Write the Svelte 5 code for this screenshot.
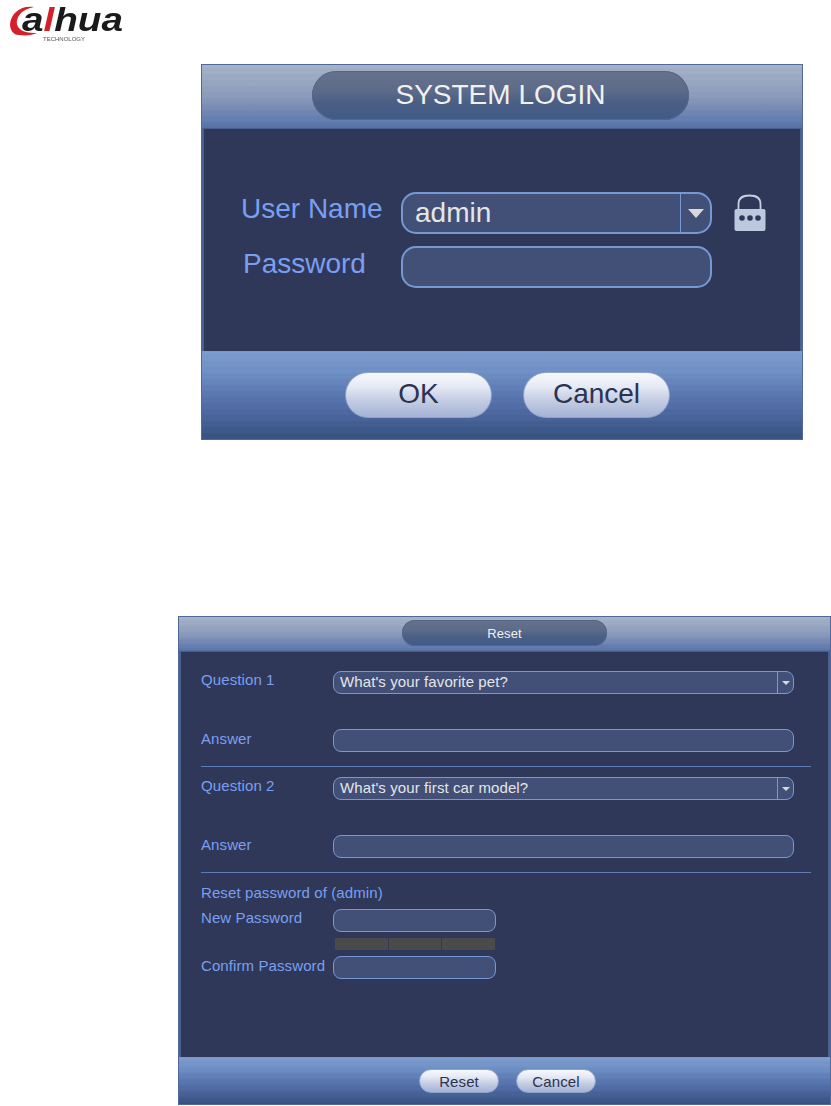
<script>
	const meterSegments = [0, 1, 2];
</script>

<div class="page">
	<header class="brand">
		<svg class="logo" width="128" height="44" viewBox="0 0 128 44" aria-label="alhua">
			<path d="M34 7 C21 5 11 13 10 24 C10 30 13 35 19 35 C27 36 32 35 37 33 C28 33 22 32 19 28 C15 24 17 17 21 13 C24 10 29 8 34 7 Z" fill="#d5202a" />
			<text x="22" y="31" class="logo-text" fill="#1a1a1a" textLength="101" lengthAdjust="spacingAndGlyphs">a<tspan fill="#d5202a">l</tspan>hua</text>
			<text x="43" y="40.5" class="logo-sub" fill="#555">TECHNOLOGY</text>
		</svg>
	</header>

	<section class="dialog login">
		<div class="head">
			<div class="title">SYSTEM LOGIN</div>
		</div>
		<div class="body">
			<div class="login-grid">
				<span class="label user">User Name</span>
				<div class="field select">
					<span class="value">admin</span>
					<span class="caret"><i></i></span>
				</div>
				<svg class="lock" width="32" height="38" viewBox="0 0 32 38">
					<path d="M4.5 15 V10 C4.5 4 9 1.5 15.5 1.5 C22 1.5 26.5 4 26.5 10 V15" fill="none" stroke="#c6d0e2" stroke-width="1.8" />
					<rect x="0.5" y="15" width="31" height="22" rx="2" fill="#bcc8de" />
					<circle cx="8" cy="24" r="2.8" fill="#2f3858" />
					<circle cx="16" cy="24" r="2.8" fill="#2f3858" />
					<circle cx="24" cy="24" r="2.8" fill="#2f3858" />
				</svg>

				<span class="label pass">Password</span>
				<div class="field"></div>
			</div>
		</div>
		<div class="foot">
			<button class="btn">OK</button>
			<button class="btn">Cancel</button>
		</div>
	</section>

	<section class="dialog reset">
		<div class="head">
			<div class="title">Reset</div>
		</div>
		<div class="body">
			<div class="qa">
				<span class="label">Question 1</span>
				<div class="field select">
					<span class="value">What's your favorite pet?</span>
					<span class="caret"><i></i></span>
				</div>
				<span class="label lower">Answer</span>
				<div class="field"></div>
			</div>
			<hr />
			<div class="qa">
				<span class="label">Question 2</span>
				<div class="field select">
					<span class="value">What's your first car model?</span>
					<span class="caret"><i></i></span>
				</div>
				<span class="label lower">Answer</span>
				<div class="field"></div>
			</div>
			<hr />
			<div class="label reset-of">Reset password of (admin)</div>
			<div class="pw-grid">
				<span class="label">New Password</span>
				<div class="field"></div>
				<div class="meter">
					{#each meterSegments as seg (seg)}
						<span></span>
					{/each}
				</div>
				<span class="label lower">Confirm Password</span>
				<div class="field"></div>
			</div>
		</div>
		<div class="foot">
			<button class="btn">Reset</button>
			<button class="btn">Cancel</button>
		</div>
	</section>
</div>

<style>
	:global(body) {
		margin: 0;
		background: #fff;
	}

	.page {
		width: 831px;
		height: 1106px;
		overflow: hidden;
		font-family: 'Liberation Sans', Arial, sans-serif;
	}

	/* Logo */
	.brand {
		height: 64px;
	}

	.logo {
		display: block;
		filter: blur(0.5px);
	}

	.logo-text {
		font-family: 'Liberation Sans', Arial, sans-serif;
		font-size: 34px;
		font-weight: 700;
		font-style: italic;
	}

	.logo-sub {
		font-family: 'Liberation Sans', Arial, sans-serif;
		font-size: 6px;
	}

	/* Shared dialog chrome */
	.dialog {
		display: flex;
		flex-direction: column;
		box-sizing: border-box;
		border: 1px solid #50689a;
		background: #2f3858;
	}

	.head {
		display: flex;
		justify-content: center;
		box-sizing: border-box;
		flex: none;
		background:
			repeating-linear-gradient(rgba(255, 255, 255, 0.012) 0 3px, rgba(0, 0, 0, 0.012) 3px 6px),
			linear-gradient(#a6b2c8 0%, #98a8c2 25%, #8a9bbc 50%, #7488b2 72%, #5d7bb0 92%, #566f9f 100%);
		border-bottom: 1px solid #4a5d8c;
	}

	.title {
		display: flex;
		align-items: center;
		justify-content: center;
		box-sizing: border-box;
		color: #f1f1ef;
		background: linear-gradient(#66728d 0%, #5c6b89 40%, #4c5f85 62%, #3f5b88 100%);
		box-shadow: inset 0 0 0 1px #566786;
	}

	.body {
		flex: 1;
		box-sizing: border-box;
		border-left: 2px solid #4d5f8e;
		border-right: 2px solid #4d5f8e;
		min-height: 0;
	}

	.foot {
		display: flex;
		justify-content: center;
		flex: none;
		box-sizing: border-box;
		background:
			repeating-linear-gradient(rgba(255, 255, 255, 0.012) 0 3px, rgba(0, 0, 0, 0.012) 3px 6px),
			linear-gradient(#7b9ccd 0%, #7091c6 22%, #5a78b2 48%, #4d69a2 68%, #3e5a8c 88%, #375080 100%);
		border-top: 1px solid #7b97c4;
	}

	.btn {
		padding: 0;
		font-family: inherit;
		color: #2b3350;
		background: linear-gradient(#f7f8fc 0%, #e6eaf4 30%, #c4cde3 62%, #a4b2d6 100%);
		border: 1px solid #8ea2cb;
		cursor: pointer;
	}

	.field {
		position: relative;
		display: flex;
		align-items: center;
		box-sizing: border-box;
		background: #425077;
		border: solid #7699d3;
	}

	.value {
		color: #e4e6e6;
	}

	.caret {
		position: absolute;
		top: 0;
		right: 0;
		bottom: 0;
		display: flex;
		align-items: center;
		justify-content: center;
		box-sizing: border-box;
		border-left: 1px solid #7699d3;
	}

	.caret i {
		display: block;
		width: 0;
		height: 0;
		border-style: solid;
		border-color: #d8d9da transparent transparent;
	}

	.label {
		color: #7b9ff0;
		white-space: nowrap;
	}

	/* Login dialog */
	.login {
		width: 602px;
		height: 376px;
		margin-left: 201px;
		font-size: 28px;
	}

	.login .head {
		height: 64px;
		padding: 6px 3px 0 0;
	}

	.login .title {
		width: 377px;
		height: 49px;
		padding-bottom: 2px;
		border-radius: 25px;
	}

	.login .body {
		padding: 63px 0 0 37px;
	}

	.login-grid {
		display: grid;
		grid-template-columns: 160px 311px auto;
		grid-template-rows: 42px 42px;
		row-gap: 12px;
		align-items: center;
	}

	.login .field {
		height: 42px;
		border-width: 2.5px;
		border-radius: 15px;
		padding-left: 12px;
	}

	.login .caret {
		width: 30px;
	}

	.login .caret i {
		border-width: 9px 8px 0;
	}

	.lock {
		margin-left: 22px;
	}

	.label.user {
		margin-top: -9px;
	}

	.label.pass {
		margin: -6px 0 0 2px;
	}

	.login .foot {
		height: 88px;
		gap: 31px;
		padding: 20px 0 0 11px;
	}

	.login .btn {
		width: 147px;
		height: 46px;
		padding-bottom: 3px;
		font-size: 28px;
		border-radius: 23px;
	}

	/* Reset dialog */
	.reset {
		width: 653px;
		height: 489px;
		margin: 176px 0 0 178px;
		font-size: 15px;
		letter-spacing: 0.1px;
	}

	.reset .head {
		height: 35px;
		padding-top: 3px;
	}

	.reset .title {
		width: 205px;
		height: 26px;
		border-radius: 13px;
		font-size: 13px;
	}

	.reset .body {
		padding: 19px 17px 0 20px;
	}

	.qa {
		display: grid;
		grid-template-columns: 132px 461px;
		grid-template-rows: 23px 23px;
		row-gap: 35px;
	}

	.qa + hr {
		margin: 14px 0 10px;
	}

	hr {
		height: 1px;
		margin: 0;
		border: 0;
		background: #5f7db4;
	}

	.reset .field {
		height: 23px;
		border-width: 1.5px;
		border-radius: 8px;
		padding: 0 0 2px 6px;
	}

	.reset .label.lower {
		margin-top: 1px;
	}

	.reset .caret {
		width: 16px;
	}

	.reset .caret i {
		border-width: 4px 4px 0;
	}

	.reset-of {
		margin-top: 10px;
		line-height: 19px;
	}

	.pw-grid {
		display: grid;
		grid-template-columns: 132px 163px;
		grid-template-rows: 23px 12px 23px;
		row-gap: 6px;
		margin-top: 7px;
	}

	.meter {
		grid-column: 2;
		display: flex;
		gap: 1px;
		margin: 0 1px 0 2px;
	}

	.meter span {
		flex: 1;
		background: #4a4a4a;
	}

	.reset .foot {
		height: 47px;
		gap: 17px;
		padding: 11px 0 0 6px;
	}

	.reset .btn {
		width: 80px;
		height: 24px;
		font-size: 15px;
		letter-spacing: 0.1px;
		border-radius: 12px;
	}
</style>
